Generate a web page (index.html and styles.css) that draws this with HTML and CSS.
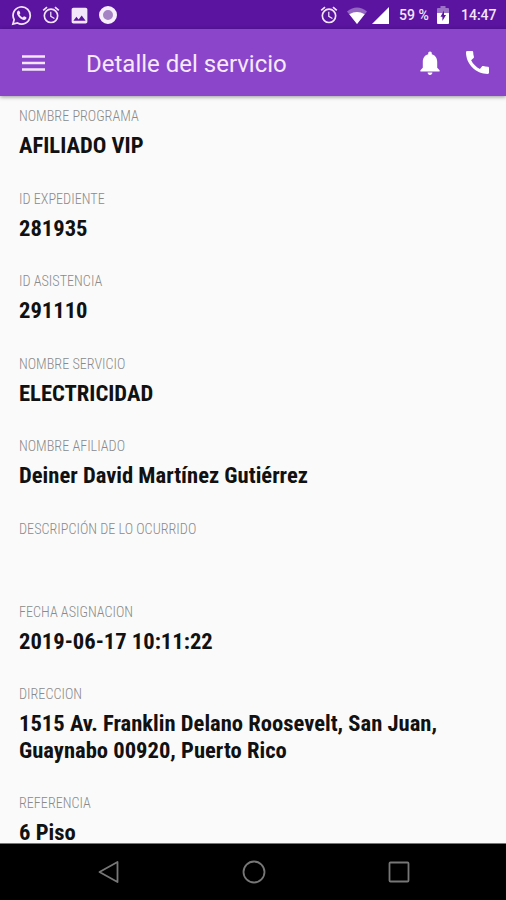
FILE: index.html
```html
<!DOCTYPE html>
<html lang="es">
<head>
<meta charset="utf-8">
<title>Detalle del servicio</title>
<link rel="stylesheet" href="styles.css">
</head>
<body>
<div class="status">
  <svg class="whatsapp" viewBox="0 0 24 24"><path fill="none" stroke="currentColor" stroke-width="2" d="M2.2 21.8l1.4-5.1A9.8 9.8 0 1 1 7.4 20.500z"/><path d="M8.700 6.300c-.6 0-2 1-1.900 2.800.2 3.500 4.700 7.800 8 7.900 1.900 0 2.900-1.400 2.900-2.500 0-.5-2.500-1.700-2.900-1.600-.5.100-1 1.400-1.400 1.400-1 0-3.600-2.500-3.700-3.400 0-.4 1-1 1-1.400 0-.5-1-3.200-2-3.200z"/></svg>
  <svg class="alarm" viewBox="0 0 24 24"><path d="M22 5.720l-4.600-3.860-1.290 1.530 4.600 3.860L22 5.720zM7.880 3.390L6.600 1.860 2 5.710l1.290 1.530 4.590-3.850zM12.500 8H11v6l4.750 2.850.75-1.230-4-2.370V8zM12 4a9 9 0 1 0 0 18 9 9 0 0 0 0-18zm0 16a7 7 0 1 1 0-14 7 7 0 0 1 0 14z"/></svg>
  <svg class="photo" viewBox="0 0 24 24"><path d="M21 19V5c0-1.100-.9-2-2-2H5c-1.100 0-2 .9-2 2v14c0 1.100.9 2 2 2h14c1.100 0 2-.9 2-2zM8.500 13.500l2.500 3.010L14.500 12l4.500 6H5l3.500-4.500z"/></svg>
  <span class="disc"></span>
  <svg class="alarm right" viewBox="0 0 24 24"><path d="M22 5.720l-4.600-3.860-1.290 1.530 4.600 3.860L22 5.720zM7.880 3.390L6.600 1.860 2 5.710l1.290 1.530 4.590-3.850zM12.500 8H11v6l4.750 2.850.75-1.230-4-2.370V8zM12 4a9 9 0 1 0 0 18 9 9 0 0 0 0-18zm0 16a7 7 0 1 1 0-14 7 7 0 0 1 0 14z"/></svg>
  <svg class="wifi" viewBox="0 0 20 17"><path opacity=".35" d="M0 4.500Q10-3.500 20 4.500L10 17z"/><path d="M2.300 7.300Q10 2.500 17.700 7.300L10 17z"/></svg>
  <svg class="signal" viewBox="0 0 17 17"><path d="M17 0v17H0z"/></svg>
  <span class="percent">59 %</span>
  <svg class="battery" viewBox="0 0 12 18"><path opacity=".4" d="M3.500 0h5v2H11q1 0 1 1v4H0V3q0-1 1-1h2.500z"/><path d="M0 7h12v10q0 1-1 1H1q-1 0-1-1z"/><path fill="#5a14a0" d="M7 4.500v4.500H9l-3.600 6V10.800H3.500z"/></svg>
  <span class="clock">14:47</span>
</div>
<header class="bar">
  <svg class="menu" viewBox="0 0 24 16"><path d="M0 0h24v2.500H0zM0 6.750h24v2.500H0zM0 13.500h24V16H0z"/></svg>
  <h1 class="title">Detalle del servicio</h1>
  <svg class="bell" viewBox="4 2 16 20"><path d="M12 22c1.100 0 2-.9 2-2h-4c0 1.100.89 2 2 2zm6-6v-5c0-3.070-1.640-5.640-4.500-6.320V4c0-.83-.67-1.500-1.500-1.500s-1.500.67-1.500 1.500v.68C7.630 5.360 6 7.920 6 11v5l-2 2v1h16v-1l-2-2z"/></svg>
  <svg class="phone" viewBox="3 3 18 18"><path d="M20.010 15.380c-1.230 0-2.420-.2-3.530-.56-.35-.12-.74-.03-1.010.24l-1.570 1.970c-2.830-1.350-5.480-3.900-6.890-6.830l1.950-1.660c.27-.28.35-.67.240-1.020-.37-1.110-.56-2.300-.56-3.530 0-.54-.45-.99-.99-.99H4.190C3.650 3 3 3.240 3 3.990 3 13.280 10.730 21 20.010 21c.71 0 .99-.63.99-1.180v-3.450c0-.54-.45-.99-.99-.99z"/></svg>
</header>
<main class="details">
  <section class="item"><div class="label">NOMBRE PROGRAMA</div><div class="value">AFILIADO VIP</div></section>
  <section class="item"><div class="label">ID EXPEDIENTE</div><div class="value">281935</div></section>
  <section class="item"><div class="label">ID ASISTENCIA</div><div class="value">291110</div></section>
  <section class="item"><div class="label">NOMBRE SERVICIO</div><div class="value">ELECTRICIDAD</div></section>
  <section class="item"><div class="label">NOMBRE AFILIADO</div><div class="value">Deiner David Martínez Gutiérrez</div></section>
  <section class="item"><div class="label">DESCRIPCIÓN DE LO OCURRIDO</div><div class="value"></div></section>
  <section class="item"><div class="label">FECHA ASIGNACION</div><div class="value">2019-06-17 10:11:22</div></section>
  <section class="item"><div class="label">DIRECCION</div><div class="value">1515 Av. Franklin Delano Roosevelt, San Juan,<br>Guaynabo 00920, Puerto Rico</div></section>
  <section class="item"><div class="label">REFERENCIA</div><div class="value">6 Piso</div></section>
</main>
<nav class="nav">
  <svg viewBox="0 0 24 24"><path d="M20.500 2v20L2.500 12z"/></svg>
  <svg viewBox="0 0 24 24"><circle cx="12" cy="12" r="10.500"/></svg>
  <svg viewBox="0 0 24 24"><rect x="2.500" y="2.500" width="19" height="19" rx="1"/></svg>
</nav>
</body>
</html>
```

FILE: styles.css
```css
* { box-sizing: border-box; }
body {
  margin: 0;
  width: 506px;
  height: 900px;
  overflow: hidden;
  display: flex;
  flex-direction: column;
  background: #fafafa;
  font-family: Roboto, "Liberation Sans", sans-serif;
}
svg { display: block; flex: none; fill: currentColor; }
.status {
  flex: none;
  height: 29px;
  display: flex;
  align-items: center;
  padding: 1px 9px 0 11px;
  background: #5a14a0;
  color: #f3e5fa;
}
.whatsapp { width: 21px; height: 21px; }
.alarm { width: 20px; height: 20px; margin-left: 9px; }
.photo { width: 21px; height: 21px; margin-left: 8px; }
.disc {
  width: 18px;
  height: 18px;
  margin-left: 9px;
  border: 4px solid #f8effc;
  border-radius: 50%;
  background: #a583c5;
}
.right { margin-left: auto; }
.wifi { width: 20px; height: 17px; margin-left: 8px; color: #fff; }
.signal { width: 17px; height: 17px; margin-left: 5px; color: #fff; }
.percent { width: 30px; margin-left: 10px; font-size: 14px; font-weight: 500; white-space: nowrap; }
.battery { width: 12px; height: 18px; margin-left: 8px; color: #fff; }
.clock { width: 36px; margin-left: 12px; font-size: 14px; font-weight: 500; }
.bar {
  flex: none;
  height: 67px;
  position: relative;
  display: flex;
  align-items: center;
  padding: 0 17px 0 22px;
  background: #8b45cb;
  color: #fff;
  box-shadow: 0 1px 4px rgba(0, 0, 0, .4);
}
.menu { width: 23px; height: 16px; color: #f4e6fb; }
.title { margin: 0 auto 0 41px; font-size: 24px; font-weight: 400; line-height: 28px; padding-top: 2px; color: #f6e9fc; }
.bell { width: 20px; height: 24px; }
.phone { width: 23px; height: 23px; margin-left: 26px; }
.details {
  flex: 1;
  min-height: 0;
  overflow: hidden;
  padding: 11px 19px 0;
  font-family: "Roboto Condensed", Roboto, "Liberation Sans", sans-serif;
  font-stretch: 75%;
}
.item { margin-bottom: 30.200px; }
.label { height: 18px; line-height: 18px; font-size: 14.200px; font-weight: 300; color: #8a8a8a; }
.value { min-height: 26.400px; margin-top: 8px; line-height: 26.400px; font-size: 22.600px; font-weight: 700; color: #111; white-space: nowrap; }
.nav {
  flex: none;
  height: 57px;
  display: flex;
  align-items: center;
  justify-content: space-between;
  padding: 0 95px 0 97px;
  border-top: 1px solid #777;
  background: #000;
}
.nav svg { width: 24px; height: 24px; fill: none; stroke: #777; stroke-width: 1.800; stroke-linejoin: round; }
```
